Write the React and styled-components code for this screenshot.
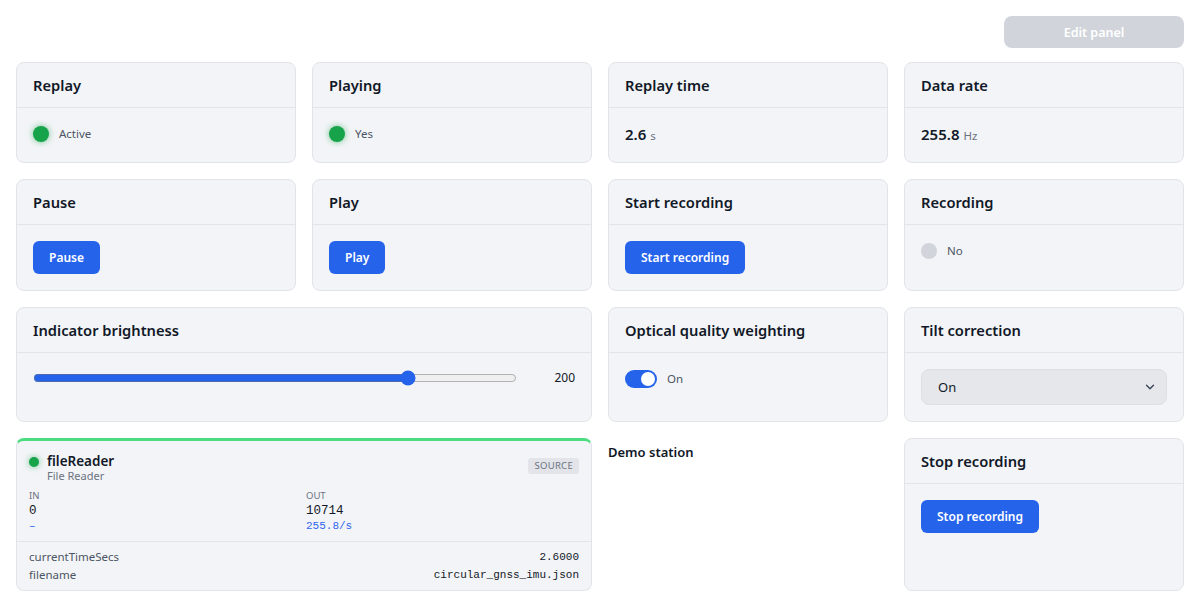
import React from "react";
import styled, { createGlobalStyle } from "styled-components";
import { ChevronDown } from "lucide-react";

const GlobalStyle = createGlobalStyle`
    * { box-sizing: border-box; }
    body {
        margin: 0;
        background: #ffffff;
        font-family: "Noto Sans", "Open Sans", sans-serif;
        color: #111827;
    }
`;

const Page = styled.div`
    padding: 16px;
`;

const TopBar = styled.div`
    display: flex;
    justify-content: flex-end;
    margin-bottom: 14px;
`;

const EditButton = styled.button`
    width: 180px;
    height: 32px;
    border: none;
    border-radius: 8px;
    background: #d1d5db;
    color: #ffffff;
    font-family: inherit;
    font-size: 12.5px;
    font-weight: 600;
    padding-top: 2px;
`;

const Grid = styled.div`
    display: grid;
    grid-template-columns: repeat(4, 1fr);
    gap: 16px;
    align-items: stretch;
`;

const Card = styled.div`
    grid-column: span ${(p) => p.span || 1};
    background: #f3f4f7;
    border: 1px solid #e2e4e9;
    border-radius: 8px;
    display: flex;
    flex-direction: column;
`;

const CardHeader = styled.div`
    padding: 12px 16px;
    border-bottom: 1px solid #e2e4e9;
    font-size: 14.7px;
    line-height: 20px;
    font-weight: 600;
    color: #111827;
`;

const CardBody = styled.div`
    padding: 16px;
    display: flex;
    align-items: center;
    gap: 10px;
`;

const Dot = styled.span`
    width: ${(p) => p.size || 16}px;
    height: ${(p) => p.size || 16}px;
    border-radius: 50%;
    flex-shrink: 0;
    background: ${(p) => (p.on ? "#16a34a" : "#d1d5db")};
    box-shadow: ${(p) => (p.on ? "0 0 6px rgba(22, 163, 74, 0.6)" : "none")};
`;

const StatusText = styled.span`
    font-size: 11.5px;
    line-height: 20px;
    color: #4b5563;
`;

const Value = styled.span`
    font-size: 15px;
    line-height: 20px;
    font-weight: 600;
    color: #111827;
    small {
        font-size: 11.5px;
        font-weight: 400;
        color: #6b7280;
        margin-left: 4px;
    }
`;

const ActionButton = styled.button`
    height: 33px;
    padding: 0 16px;
    border: none;
    border-radius: 6px;
    background: #2563eb;
    color: #ffffff;
    font-family: inherit;
    font-size: 12px;
    font-weight: 600;
`;

const Range = styled.input`
    flex: 1;
    margin: 0;
    accent-color: #2563eb;
`;

const RangeValue = styled.span`
    width: 48px;
    text-align: right;
    font-size: 12px;
    color: #111827;
`;

const SwitchTrack = styled.span`
    width: 32px;
    height: 18px;
    border-radius: 9px;
    background: #2563eb;
    display: flex;
    align-items: center;
    justify-content: flex-end;
    padding: 2px;
`;

const SwitchKnob = styled.span`
    width: 14px;
    height: 14px;
    border-radius: 50%;
    background: #ffffff;
`;

const SelectWrap = styled.div`
    position: relative;
    width: 100%;
    svg {
        position: absolute;
        right: 10px;
        top: 11px;
        color: #374151;
        pointer-events: none;
    }
`;

const Select = styled.select`
    appearance: none;
    width: 100%;
    height: 36px;
    padding: 0 16px;
    border: 1px solid #dcdfe5;
    border-radius: 8px;
    background: #e5e7eb;
    font-family: inherit;
    font-size: 13px;
    color: #111827;
`;

const StationLabel = styled.div`
    padding-top: 4px;
    font-size: 13px;
    line-height: 20px;
    font-weight: 600;
    color: #111827;
`;

const NodeCard = styled(Card)`
    border-top: 3px solid #4ade80;
`;

const NodeHeader = styled.div`
    display: flex;
    align-items: flex-start;
    padding: 12px 12px 0;
    gap: 8px;
`;

const NodeName = styled.div`
    flex: 1;
    div:first-child {
        font-size: 13.5px;
        line-height: 16px;
        font-weight: 600;
        color: #111827;
    }
    div:last-child {
        font-size: 11px;
        line-height: 13px;
        color: #6b7280;
    }
`;

const Badge = styled.span`
    margin-top: 5px;
    padding: 0 6px;
    height: 16px;
    line-height: 16px;
    border-radius: 3px;
    background: #e2e4e9;
    color: #6b7280;
    font-size: 9.5px;
    letter-spacing: 0.3px;
`;

const Stats = styled.div`
    display: grid;
    grid-template-columns: 1fr 1fr;
    gap: 0 4px;
    padding: 7px 12px 8px;
    border-bottom: 1px solid #e2e4e9;
`;

const StatLabel = styled.div`
    font-size: 9.5px;
    line-height: 14px;
    color: #6b7280;
`;

const StatNumber = styled.div`
    font-family: "Liberation Mono", "DejaVu Sans Mono", monospace;
    font-size: 12.5px;
    line-height: 16px;
    color: #111827;
`;

const StatRate = styled.div`
    font-family: "Liberation Mono", "DejaVu Sans Mono", monospace;
    font-size: 11px;
    line-height: 14px;
    color: #2f64ea;
`;

const Props = styled.div`
    padding: 6px 12px;
`;

const PropRow = styled.div`
    display: flex;
    justify-content: space-between;
    line-height: 18px;
    span:first-child {
        font-size: 11.5px;
        color: #4b5563;
    }
    span:last-child {
        font-family: "Liberation Mono", "DejaVu Sans Mono", monospace;
        font-size: 11px;
        color: #111827;
    }
`;

const StatusCard = ({ title, on, label }) => (
    <Card>
        <CardHeader>{title}</CardHeader>
        <CardBody>
            <Dot on={on} />
            <StatusText>{label}</StatusText>
        </CardBody>
    </Card>
);

const ValueCard = ({ title, value, unit }) => (
    <Card>
        <CardHeader>{title}</CardHeader>
        <CardBody>
            <Value>
                {value}
                <small>{unit}</small>
            </Value>
        </CardBody>
    </Card>
);

const ButtonCard = ({ title }) => (
    <Card>
        <CardHeader>{title}</CardHeader>
        <CardBody>
            <ActionButton>{title}</ActionButton>
        </CardBody>
    </Card>
);

const App = () => {
    return (
        <>
            <GlobalStyle />
            <Page>
                <TopBar>
                    <EditButton>Edit panel</EditButton>
                </TopBar>
                <Grid>
                    <StatusCard title="Replay" on label="Active" />
                    <StatusCard title="Playing" on label="Yes" />
                    <ValueCard title="Replay time" value="2.6" unit="s" />
                    <ValueCard title="Data rate" value="255.8" unit="Hz" />

                    <ButtonCard title="Pause" />
                    <ButtonCard title="Play" />
                    <ButtonCard title="Start recording" />
                    <StatusCard title="Recording" label="No" />

                    <Card span={2}>
                        <CardHeader>Indicator brightness</CardHeader>
                        <CardBody>
                            <Range type="range" min="0" max="255" defaultValue="200" />
                            <RangeValue>200</RangeValue>
                        </CardBody>
                    </Card>
                    <Card>
                        <CardHeader>Optical quality weighting</CardHeader>
                        <CardBody>
                            <SwitchTrack>
                                <SwitchKnob />
                            </SwitchTrack>
                            <StatusText>On</StatusText>
                        </CardBody>
                    </Card>
                    <Card>
                        <CardHeader>Tilt correction</CardHeader>
                        <CardBody>
                            <SelectWrap>
                                <Select defaultValue="on">
                                    <option value="on">On</option>
                                    <option value="off">Off</option>
                                </Select>
                                <ChevronDown size={14} strokeWidth={2.2} />
                            </SelectWrap>
                        </CardBody>
                    </Card>

                    <NodeCard span={2}>
                        <NodeHeader>
                            <Dot on size={10} style={{ marginTop: 4 }} />
                            <NodeName>
                                <div>fileReader</div>
                                <div>File Reader</div>
                            </NodeName>
                            <Badge>SOURCE</Badge>
                        </NodeHeader>
                        <Stats>
                            <div>
                                <StatLabel>IN</StatLabel>
                                <StatNumber>0</StatNumber>
                                <StatRate>–</StatRate>
                            </div>
                            <div>
                                <StatLabel>OUT</StatLabel>
                                <StatNumber>10714</StatNumber>
                                <StatRate>255.8/s</StatRate>
                            </div>
                        </Stats>
                        <Props>
                            <PropRow>
                                <span>currentTimeSecs</span>
                                <span>2.6000</span>
                            </PropRow>
                            <PropRow>
                                <span>filename</span>
                                <span>circular_gnss_imu.json</span>
                            </PropRow>
                        </Props>
                    </NodeCard>
                    <StationLabel>Demo station</StationLabel>
                    <ButtonCard title="Stop recording" />
                </Grid>
            </Page>
        </>
    );
};

export default App;
